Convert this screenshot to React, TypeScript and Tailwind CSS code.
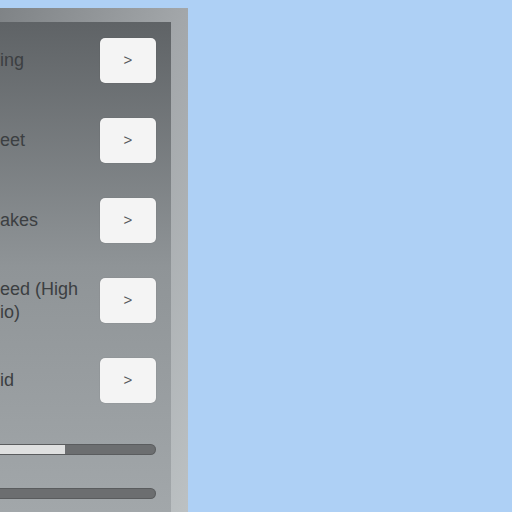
const rows = [
  { label: ["ing"] },
  { label: ["eet"] },
  { label: ["akes"] },
  { label: ["eed (High", "io)"] },
  { label: ["id"] },
];

function ArrowButton() {
  return (
    <button className="flex h-[45px] w-[56px] shrink-0 items-center justify-center rounded-[5px] bg-[#f4f4f4] text-[15px] text-[#56595c] shadow-[0_0_1px_rgba(0,0,0,0.3)]">
      &gt;
    </button>
  );
}

function Bar({ fill }: { fill: number }) {
  return (
    <div className="mr-[15px] h-[11px] overflow-hidden rounded-r-full border border-l-0 border-[#5a5c5e] bg-[#6c6e70]">
      <div className="h-full bg-[#dfe0e0]" style={{ width: fill }} />
    </div>
  );
}

export default function App() {
  return (
    <div
      className="h-[512px] w-[512px] overflow-hidden bg-[#aed0f5] pt-[8px]"
      style={{ fontFamily: '"Liberation Sans", Arial, sans-serif' }}
    >
      <div className="h-[504px] w-[188px] bg-gradient-to-br from-[#7f8386] via-[#a3a7aa] to-[#bcc1c3] pr-[17px] pt-[14px]">
        <div className="flex h-full flex-col bg-gradient-to-b from-[#5f6366] via-[#8f9497] to-[#a2a7aa] pt-[16px]">
          <div className="flex flex-col gap-[35px]">
            {rows.map((r, i) => (
              <div key={i} className="flex h-[45px] items-center justify-between pr-[15px]">
                <div className="text-[18px] leading-[23px] text-[#3c3f42]">
                  {r.label.map((l) => (
                    <div key={l}>{l}</div>
                  ))}
                </div>
                <ArrowButton />
              </div>
            ))}
          </div>
          <div className="mt-[41px] flex flex-col gap-[33px]">
            <Bar fill={65} />
            <Bar fill={0} />
          </div>
        </div>
      </div>
    </div>
  );
}
